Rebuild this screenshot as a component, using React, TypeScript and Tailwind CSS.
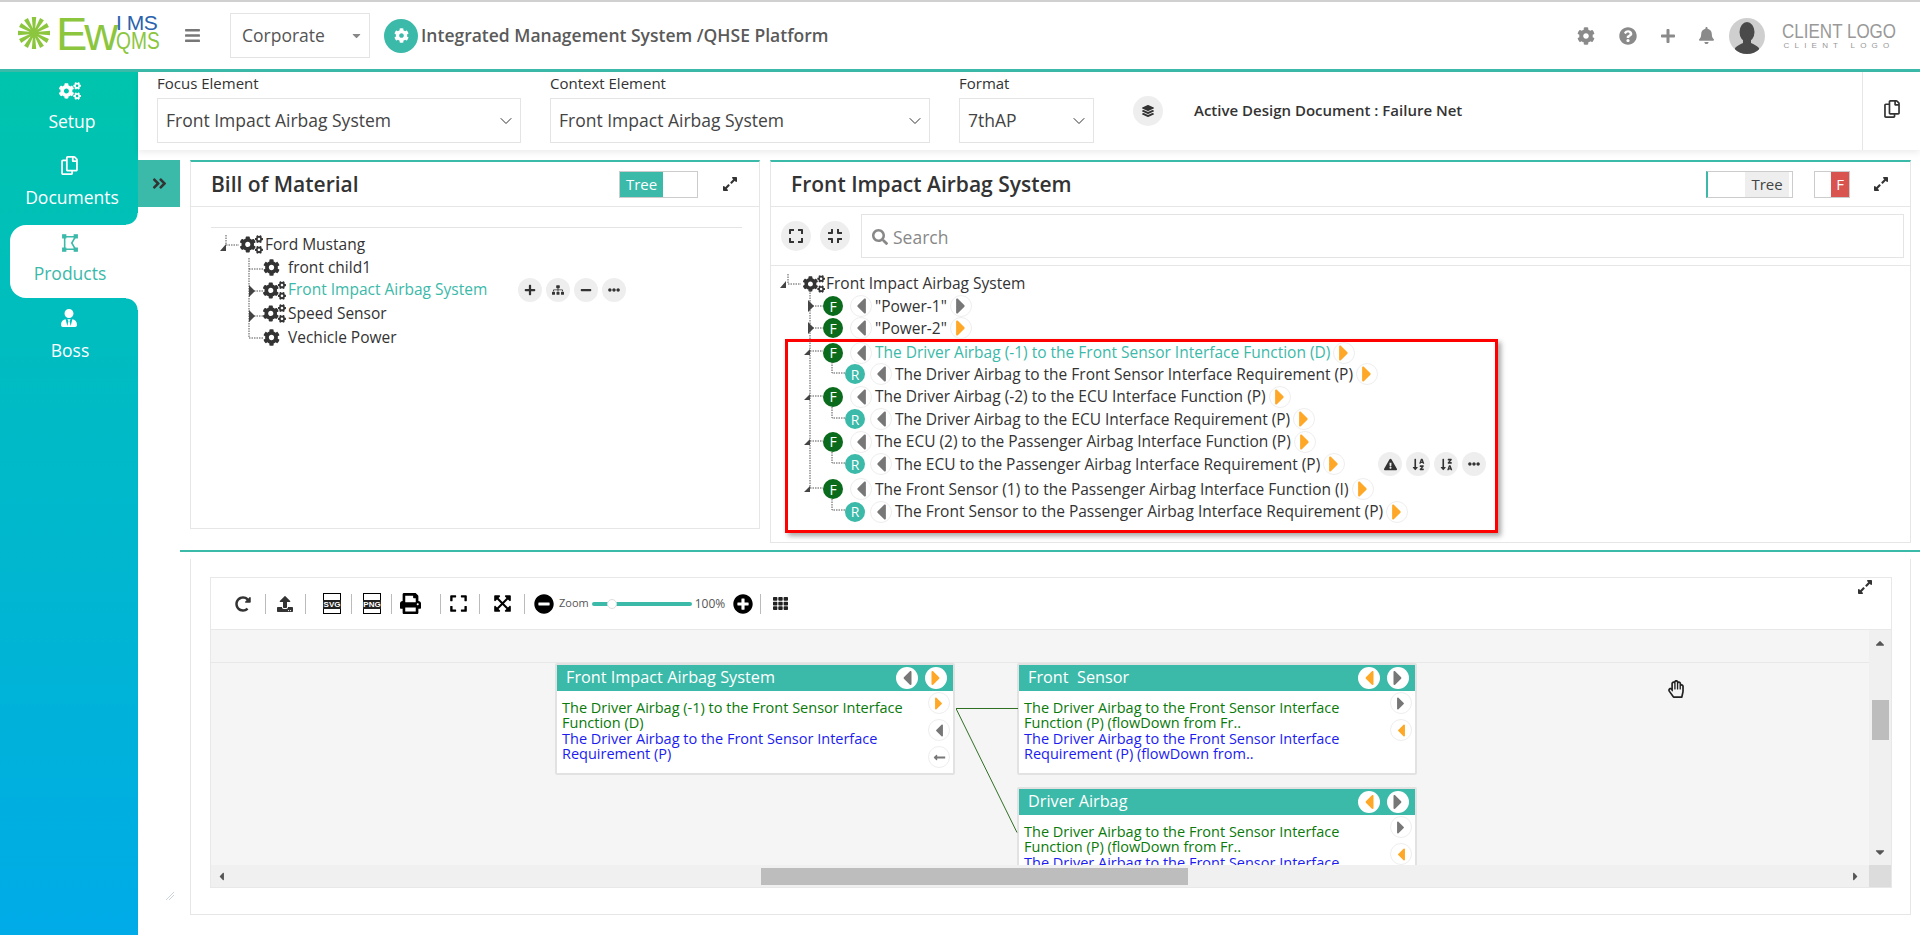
import { ChevronDown } from 'lucide-react';
import {
  FaAngleDoubleRight,
  FaBars,
  FaBell,
  FaCaretDown,
  FaCaretLeft,
  FaCaretRight,
  FaCaretUp,
  FaCog,
  FaCogs,
  FaCompress,
  FaEllipsisH,
  FaExclamationTriangle,
  FaExpand,
  FaExpandAlt,
  FaExpandArrowsAlt,
  FaLayerGroup,
  FaLongArrowAltLeft,
  FaMinus,
  FaMinusCircle,
  FaPlus,
  FaPlusCircle,
  FaPrint,
  FaQuestionCircle,
  FaRedoAlt,
  FaRegCopy,
  FaRegHandPaper,
  FaSearch,
  FaSitemap,
  FaSortAlphaDown,
  FaSortAlphaDownAlt,
  FaTh,
  FaUpload,
  FaUserTie,
} from 'react-icons/fa';

const ORANGE = '#ffa726';

const Logo = () => (
  <div className="relative h-[50px] w-[157px] shrink-0">
    <svg viewBox="0 0 34 34" className="absolute left-0 top-[5px] h-[34px] w-[34px]">
      {Array.from({ length: 12 }).map((_, i) => (
        <path key={i} d="M14.800 1h4.400L18 15h-2z" fill="#8cc63f" transform={`rotate(${i * 30} 17 17)`} />
      ))}
      <circle cx="17" cy="17" r="5" fill="#8cc63f" />
    </svg>
    <span className="absolute left-[39px] top-[-10px] font-['Liberation_Sans',sans-serif] text-[47px] leading-[66px] tracking-[-3px] text-[#8cc63f]">
      Ew
    </span>
    <span className="absolute left-[99px] top-[0px] font-['Liberation_Sans',sans-serif] text-[21px] leading-[24px] tracking-[-0.5px] text-[#2a62ad]">
      I MS
    </span>
    <span className="absolute left-[99px] top-[17px] origin-left scale-x-[0.8] font-['Liberation_Sans',sans-serif] text-[24px] leading-[26px] text-[#8cc63f]">
      QMS
    </span>
  </div>
);

const Avatar = () => (
  <div className="flex h-[36px] w-[36px] items-end justify-center overflow-hidden rounded-full bg-[#cfcfcf]">
    <svg viewBox="0 0 36 36" className="h-[36px] w-[36px]">
      <ellipse cx="18" cy="14" rx="7.5" ry="10" fill="#4a4a4a" />
      <path d="M14 22h8v3c3 1.500 6 2.500 8 5v6H6v-6c2-2.500 5-3.500 8-5z" fill="#4a4a4a" />
    </svg>
  </div>
);

const Header = () => (
  <header className="flex h-[72px] shrink-0 items-center border-b-[3px] border-t-2 border-b-[#3bb9a9] border-t-[#d0d0d0] bg-white">
    <div className="ml-[17px]">
      <Logo />
    </div>
    <FaBars className="ml-[10px] text-[#777]" size={17} />
    <div className="ml-[29px] flex h-[45px] w-[140px] items-center justify-between border border-[#e4e4e4] pl-[11px] pr-[6px] text-[17.5px] text-[#555]">
      Corporate
      <FaCaretDown className="text-[#888]" size={13} />
    </div>
    <div className="ml-[14px] flex h-[34px] w-[34px] items-center justify-center rounded-full bg-[#3bb9a9]">
      <FaCog className="text-white" size={15} />
    </div>
    <h1 className="ml-[3px] text-[17.5px] font-semibold text-[#5a5a5a]">Integrated Management System /QHSE Platform</h1>
    <div className="ml-auto flex items-center text-[#8a8a8a]">
      <FaCog size={18} />
      <FaQuestionCircle className="ml-[24px]" size={18} />
      <FaPlus className="ml-[23px]" size={16} />
      <FaBell className="ml-[22px]" size={17} />
      <div className="ml-[14px]">
        <Avatar />
      </div>
      <div className="ml-[18px] mr-[25px] flex w-[112px] flex-col items-center whitespace-nowrap font-['Liberation_Sans',sans-serif] text-[#999]">
        <span className="scale-x-[0.85] text-[20px] leading-[20px]">CLIENT LOGO</span>
        <span className="text-[8px] leading-[10px] tracking-[5.2px]">CLIENT LOGO</span>
      </div>
    </div>
  </header>
);

const ProductsIcon = () => (
  <svg viewBox="0 0 18 20" className="h-[18px] w-[16px] text-[#3bb9a9]" fill="none" stroke="currentColor" strokeWidth="1.800">
    <path d="M3 3h12l-4 7 4 7H3z" />
    <rect x="1" y="1" width="3" height="3" fill="currentColor" />
    <rect x="14" y="1" width="3" height="3" fill="currentColor" />
    <rect x="1" y="16" width="3" height="3" fill="currentColor" />
    <rect x="14" y="16" width="3" height="3" fill="currentColor" />
  </svg>
);

const Sidebar = () => (
  <aside className="flex w-[138px] shrink-0 flex-col bg-gradient-to-b from-[#00c4ac] to-[#00abe8] text-[17.5px] text-white">
    <div className="flex h-[76px] flex-col items-center pt-[8px]">
      <FaCogs size={22} className="ml-[2px]" />
      <span className="ml-[6px] mt-[7px] leading-[24px]">Setup</span>
    </div>
    <div className="flex h-[77px] flex-col items-center pt-[8px]">
      <FaRegCopy size={19} />
      <span className="ml-[6px] mt-[10px] leading-[24px]">Documents</span>
    </div>
    <div className="relative ml-[10px] flex h-[73px] flex-col items-center rounded-l-[16px] bg-white pr-[8px] pt-[9px] text-[#3bb9a9]">
      <span className="absolute -top-[12px] right-0 h-[12px] w-[12px] bg-[radial-gradient(circle_at_0_0,transparent_11px,white_12px)]" />
      <ProductsIcon />
      <span className="mt-[9px] leading-[24px]">Products</span>
      <span className="absolute -bottom-[12px] right-0 h-[12px] w-[12px] bg-[radial-gradient(circle_at_0_100%,transparent_11px,white_12px)]" />
    </div>
    <div className="flex flex-col items-center pt-[11px]">
      <FaUserTie size={18} />
      <span className="ml-[2px] mt-[11px] leading-[24px]">Boss</span>
    </div>
  </aside>
);

const SelectBox = ({ label, value, width }: { label: string; value: string; width: string }) => (
  <div className={width}>
    <div className="h-[26px] text-[15px] leading-[22px] text-[#333]">{label}</div>
    <div className="flex h-[45px] items-center justify-between border border-[#e4e4e4] pl-[8px] pr-[4px] text-[17.5px] text-[#444]">
      {value}
      <ChevronDown size={20} strokeWidth={1.2} className="text-[#333]" />
    </div>
  </div>
);

const FilterBar = () => (
  <div className="relative z-10 flex h-[78px] shrink-0 bg-white shadow-[0_3px_6px_rgba(0,0,0,0.07)]">
    <div className="ml-[19px] flex items-start gap-[29px]">
      <SelectBox label="Focus Element" value="Front Impact Airbag System" width="w-[364px]" />
      <SelectBox label="Context Element" value="Front Impact Airbag System" width="w-[380px]" />
      <SelectBox label="Format" value="7thAP" width="w-[135px]" />
    </div>
    <div className="ml-[39px] mt-[24px] flex h-[30px] w-[30px] items-center justify-center rounded-full bg-[#eee] text-[#333]">
      <FaLayerGroup size={12} />
    </div>
    <div className="ml-[31px] mt-[26px] text-[15px] font-semibold leading-[24px] text-[#333]">
      Active Design Document : Failure Net
    </div>
    <div className="ml-auto flex w-[58px] justify-center border-l border-[#e6e6e6] pt-[28px] text-[#333]">
      <FaRegCopy size={18} />
    </div>
  </div>
);

const RoundBtn = ({ children, size = 'w-[24px] h-[24px]' }: { children: React.ReactNode; size?: string }) => (
  <span className={`flex shrink-0 items-center justify-center rounded-full bg-[#eee] text-[#333] ${size}`}>{children}</span>
);

const CaretBtn = ({
  dir,
  color = '#777',
  solid,
  iconSize = 26,
}: {
  dir: 'left' | 'right';
  color?: string;
  solid?: boolean;
  iconSize?: number;
}) => {
  const Icon = dir === 'left' ? FaCaretLeft : FaCaretRight;
  return (
    <span
      className={`flex h-[22px] w-[22px] shrink-0 items-center justify-center rounded-full ${
        solid ? 'bg-white' : 'border border-[#eee] bg-white'
      }`}
    >
      <Icon size={iconSize} color={color} />
    </span>
  );
};

const BomTree = () => (
  <div className="relative ml-[20px] mt-[20px] w-[531px] border-t border-[#e4e4e4] pt-[5px] text-[15.5px] font-medium text-[#333]">
    <svg className="pointer-events-none absolute left-0 top-0 h-[130px] w-[100px]" fill="none">
      <path
        d="M15 7v10h13M38 30v80h14M38 41h14M38 63h14M38 88h14"
        stroke="#555"
        strokeDasharray="1.500 1"
      />
      <path d="M9 23l6-7v7zM38 57l6 6-6 6zM38 82l6 6-6 6z" fill="#444" />
    </svg>
    <div className="flex h-[23px] items-center pl-[29px]">
      <FaCogs size={23} />
      <span className="ml-[2px]">Ford Mustang</span>
    </div>
    <div className="flex h-[23px] items-center pl-[52px]">
      <FaCog size={17} />
      <span className="ml-[8px]">front child1</span>
    </div>
    <div className="flex h-[22px] items-center pl-[52px]">
      <FaCogs size={23} />
      <span className="ml-[2px] text-[#3bb9a9]">Front Impact Airbag System</span>
      <div className="ml-[31px] flex gap-[4px]">
        <RoundBtn><FaPlus size={12} /></RoundBtn>
        <RoundBtn><FaSitemap size={12} /></RoundBtn>
        <RoundBtn><FaMinus size={12} /></RoundBtn>
        <RoundBtn><FaEllipsisH size={12} /></RoundBtn>
      </div>
    </div>
    <div className="flex h-[25px] items-center pl-[52px]">
      <FaCogs size={23} />
      <span className="ml-[2px]">Speed Sensor</span>
    </div>
    <div className="flex h-[23px] items-center pl-[52px]">
      <FaCog size={17} />
      <span className="ml-[8px]">Vechicle Power</span>
    </div>
  </div>
);

const Badge = ({ kind }: { kind: 'F' | 'R' }) => (
  <span
    className={`flex h-[20px] w-[20px] shrink-0 items-center justify-center rounded-full text-[14px] font-medium text-white ${
      kind === 'F' ? 'bg-[#0a6b1c]' : 'bg-[#3bb9a9]'
    }`}
  >
    {kind}
  </span>
);

const TreeRow = ({
  kind,
  text,
  next = ORANGE,
  active,
  className = 'h-[22.5px]',
  children,
}: {
  kind: 'F' | 'R';
  text: string;
  next?: string;
  active?: boolean;
  className?: string;
  children?: React.ReactNode;
}) => (
  <div className={`flex items-center ${kind === 'F' ? 'pl-[52px]' : 'pl-[74px]'} ${className}`}>
    <Badge kind={kind} />
    <span className={kind === 'F' ? 'ml-[7px]' : 'ml-[5px]'}>
      <CaretBtn dir="left" />
    </span>
    <span className={`ml-[3px] whitespace-nowrap ${active ? 'text-[#3bb9a9]' : ''}`}>{text}</span>
    <span className="ml-[3px]">
      <CaretBtn dir="right" color={next} />
    </span>
    {children}
  </div>
);

const FunctionTree = () => (
  <div className="relative pt-[7px] text-[15.5px] font-medium text-[#333]">
    <svg className="pointer-events-none absolute left-0 top-0 h-[270px] w-[80px]" fill="none">
      <path
        d="M17 8v10h13M39 24v198M39 40h13M39 62h13M39 85h13M39 130h13M39 175h13M39 222h13M61 96v11h14M61 141v11h14M61 186v11h14M61 233v11h14"
        stroke="#555"
        strokeDasharray="1.500 1"
      />
      <path d="M9 22l6-7v7zM37 34l6 6-6 6zM37 56l6 6-6 6zM33 89l6-6v6zM33 134l6-6v6zM33 179l6-6v6zM33 226l6-6v6z" fill="#444" />
    </svg>
    <div className="flex h-[22px] items-center pl-[32px]">
      <FaCogs size={22} />
      <span className="ml-[1px]">Front Impact Airbag System</span>
    </div>
    <TreeRow kind="F" text={'"Power-1"'} next="#777" />
    <TreeRow kind="F" text={'"Power-2"'} className="h-[21.5px]" />
    <div className="ml-[14px] h-[194px] w-[713px] border-[3px] border-[#f00] shadow-[3px_3px_5px_rgba(0,0,0,0.35)]">
      <div className="-ml-[17px] w-[800px]">
        <TreeRow kind="F" text="The Driver Airbag (-1) to the Front Sensor Interface Function (D)" active className="h-[21px]" />
        <TreeRow kind="R" text="The Driver Airbag to the Front Sensor Interface Requirement (P)" />
        <TreeRow kind="F" text="The Driver Airbag (-2) to the ECU Interface Function (P)" />
        <TreeRow kind="R" text="The Driver Airbag to the ECU Interface Requirement (P)" />
        <TreeRow kind="F" text="The ECU (2) to the Passenger Airbag Interface Function (P)" />
        <TreeRow kind="R" text="The ECU to the Passenger Airbag Interface Requirement (P)">
          <div className="ml-[33px] flex gap-[4px]">
            <RoundBtn><FaExclamationTriangle size={13} /></RoundBtn>
            <RoundBtn><FaSortAlphaDown size={13} /></RoundBtn>
            <RoundBtn><FaSortAlphaDownAlt size={13} /></RoundBtn>
            <RoundBtn><FaEllipsisH size={12} /></RoundBtn>
          </div>
        </TreeRow>
        <TreeRow kind="F" text="The Front Sensor (1) to the Passenger Airbag Interface Function (I)" className="mt-[2.500px] h-[22.500px]" />
        <TreeRow kind="R" text="The Front Sensor to the Passenger Airbag Interface Requirement (P)" />
      </div>
    </div>
  </div>
);

const BomPanel = () => (
  <section className="h-[369px] w-[570px] shrink-0 border border-t-2 border-[#e6e6e6] border-t-[#3bb9a9]">
    <div className="flex h-[45px] items-center border-b border-[#e6e6e6] pl-[20px] pr-[21px]">
      <h2 className="pt-[2px] text-[21px] font-semibold text-[#333]">Bill of Material</h2>
      <div className="ml-auto flex h-[27px] w-[79px] border border-[#ccc] text-[15px] text-white">
        <span className="flex w-[43px] items-center justify-center bg-[#3bb9a9]">Tree</span>
      </div>
      <FaExpandAlt className="ml-[24px] text-[#333]" size={16} />
    </div>
    <BomTree />
  </section>
);

const DetailPanel = () => (
  <section className="h-[383px] w-[1141px] shrink-0 border border-t-2 border-[#e6e6e6] border-t-[#3bb9a9]">
    <div className="flex h-[45px] items-center border-b border-[#e6e6e6] pl-[20px] pr-[21px]">
      <h2 className="pt-[2px] text-[21px] font-semibold text-[#333]">Front Impact Airbag System</h2>
      <div className="ml-auto flex h-[27px] w-[87px] justify-end border border-l-2 border-[#ccc] border-l-[#3bb9a9] pr-[3px] text-[15px] text-[#444]">
        <span className="flex w-[44px] items-center justify-center bg-[#eee]">Tree</span>
      </div>
      <div className="ml-[21px] flex h-[27px] w-[36px] justify-end border border-[#ccc] text-[15px] text-white">
        <span className="flex w-[18px] items-center justify-center bg-[#d9534f]">F</span>
      </div>
      <FaExpandAlt className="ml-[23px] text-[#333]" size={16} />
    </div>
    <div className="flex h-[59px] items-center gap-[9px] border-b border-[#e6e6e6] pl-[10px] pr-[6px]">
      <RoundBtn size="w-[30px] h-[30px]"><FaExpand size={16} /></RoundBtn>
      <RoundBtn size="w-[30px] h-[30px]"><FaCompress size={16} /></RoundBtn>
      <div className="ml-[2px] flex h-[44px] flex-1 items-center border border-[#e4e4e4] pl-[10px] pt-[2px] text-[17.5px] text-[#888]">
        <FaSearch size={16} />
        <span className="ml-[5px]">Search</span>
      </div>
    </div>
    <FunctionTree />
  </section>
);

const FileBadge = ({ label, className }: { label: string; className: string }) => (
  <span className={`relative h-[21px] w-[18px] shrink-0 border border-black bg-white ${className}`}>
    <span className="absolute left-[-1px] top-[6px] w-[18px] bg-[#222] text-center font-['Liberation_Sans',sans-serif] text-[8px] font-bold leading-[9px] text-white">
      {label}
    </span>
  </span>
);

const Sep = ({ className }: { className: string }) => <span className={`h-[20px] w-px shrink-0 bg-[#bbb] ${className}`} />;

const Toolbar = () => (
  <div className="flex h-[51px] items-center pl-[24px] text-black">
    <FaRedoAlt size={16} className="shrink-0 text-[#333]" />
    <Sep className="ml-[14px]" />
    <FaUpload size={16} className="ml-[11px] shrink-0 text-[#333]" />
    <Sep className="ml-[12px]" />
    <FileBadge label="SVG" className="ml-[17px]" />
    <Sep className="ml-[10px]" />
    <FileBadge label="PNG" className="ml-[11px]" />
    <Sep className="ml-[10px]" />
    <FaPrint size={21} className="ml-[8px] shrink-0" />
    <Sep className="ml-[19px]" />
    <FaExpand size={19} className="ml-[8px] shrink-0" />
    <Sep className="ml-[11px]" />
    <FaExpandArrowsAlt size={19} className="ml-[13px] shrink-0" />
    <Sep className="ml-[12px]" />
    <FaMinusCircle size={20} className="ml-[9px] shrink-0" />
    <span className="ml-[5px] text-[11px] text-[#555]">Zoom</span>
    <span className="relative mx-[3px] h-[4px] w-[100px] rounded-full bg-[#3bb9a9]">
      <span className="absolute left-[15px] top-[-3px] h-[10px] w-[10px] rounded-full border border-[#ddd] bg-white" />
    </span>
    <span className="text-[12px] text-[#555]">100%</span>
    <FaPlusCircle className="ml-[8px] shrink-0" size={20} />
    <Sep className="ml-[7px]" />
    <FaTh size={15} className="ml-[12px] shrink-0 text-[#222]" />
  </div>
);

const NodeCard = ({
  title,
  lines,
  top,
  left,
  headLeft,
  headRight,
  side,
}: {
  title: string;
  lines: [string, string];
  top: string;
  left: string;
  headLeft: string;
  headRight: string;
  side: React.ReactNode;
}) => (
  <div className={`absolute h-[112px] w-[400px] rounded-[2px] border-2 border-[#e2e2e2] bg-white ${top} ${left}`}>
    <div className="flex h-[26px] items-center justify-between whitespace-pre bg-[#3bb9a9] pl-[9px] pr-[6px] text-[16.25px] font-medium text-white">
      <span className="-mt-[2px]">{title}</span>
      <div className="flex gap-[7px]">
        <CaretBtn dir="left" color={headLeft} solid iconSize={24} />
        <CaretBtn dir="right" color={headRight} solid iconSize={24} />
      </div>
    </div>
    <div className="flex pl-[5px] pr-[3px] pt-[9px] text-[14.5px] leading-[15.400px]">
      <div className="w-[360px]">
        <div className="text-[#0a7a0a]">{lines[0]}</div>
        <div className="text-[#1c1cf0]">{lines[1]}</div>
      </div>
      <div className="ml-auto -mt-[9px] flex flex-col gap-[5px] pt-[1px]">{side}</div>
    </div>
  </div>
);

const Diagram = () => (
  <div className="relative flex-1 overflow-hidden bg-[#f5f5f5]">
    <NodeCard
      title="Front Impact Airbag System"
      lines={[
        'The Driver Airbag (-1) to the Front Sensor Interface Function (D)',
        'The Driver Airbag to the Front Sensor Interface Requirement (P)',
      ]}
      top="top-0"
      left="left-[344px]"
      headLeft="#777"
      headRight={ORANGE}
      side={
        <>
          <CaretBtn dir="right" color={ORANGE} iconSize={21} />
          <CaretBtn dir="left" iconSize={21} />
          <span className="flex h-[22px] w-[22px] items-center justify-center rounded-full border border-[#eee]">
            <FaLongArrowAltLeft size={13} color="#777" />
          </span>
        </>
      }
    />
    <NodeCard
      title="Front  Sensor"
      lines={[
        'The Driver Airbag to the Front Sensor Interface Function (P) (flowDown from Fr..',
        'The Driver Airbag to the Front Sensor Interface Requirement (P) (flowDown from..',
      ]}
      top="top-0"
      left="left-[806px]"
      headLeft={ORANGE}
      headRight="#777"
      side={
        <>
          <CaretBtn dir="right" iconSize={21} />
          <CaretBtn dir="left" color={ORANGE} iconSize={21} />
        </>
      }
    />
    <NodeCard
      title="Driver Airbag"
      lines={[
        'The Driver Airbag to the Front Sensor Interface Function (P) (flowDown from Fr..',
        'The Driver Airbag to the Front Sensor Interface Requirement (P) (flowDown from..',
      ]}
      top="top-[124px]"
      left="left-[806px]"
      headLeft={ORANGE}
      headRight="#777"
      side={
        <>
          <CaretBtn dir="right" iconSize={21} />
          <CaretBtn dir="left" color={ORANGE} iconSize={21} />
        </>
      }
    />
    <svg className="pointer-events-none absolute left-[745px] top-[45px] h-[130px] w-[62px]" fill="none" stroke="#2f6f22">
      <path d="M0 0.500h62M0 0.500l61 124" />
    </svg>
    <FaRegHandPaper className="absolute left-[1456px] top-[17px] text-[#222]" size={18} />
  </div>
);

const LowerPanel = () => (
  <section className="relative ml-[52px] h-[356px] w-[1721px] shrink-0 border border-t-0 border-[#e6e6e6] pl-[19px] pr-[18px] pt-[18px]">
    <div className="relative flex h-[311px] flex-col border border-[#e8e8e8]">
      <Toolbar />
      <FaExpandAlt className="absolute right-[18px] top-[1px] text-[#333]" size={16} />
      <div className="flex min-h-0 flex-1">
        <div className="flex min-w-0 flex-1 flex-col">
          <div className="h-[34px] shrink-0 border-y border-[#e8e8e8] bg-[#f5f5f5]" />
          <Diagram />
        </div>
        <div className="flex w-[22px] flex-col items-center border-t border-[#e8e8e8] bg-[#f0f0f0] py-[6px] text-[#555]">
          <FaCaretUp size={14} />
          <span className="mt-[50px] h-[40px] w-[17px] bg-[#bdbdbd]" />
          <FaCaretDown size={14} className="mt-auto" />
        </div>
      </div>
      <div className="flex h-[22px] shrink-0 items-center bg-[#f0f0f0] text-[#555]">
        <FaCaretLeft size={13} className="ml-[4px]" />
        <span className="ml-[533px] h-[17px] w-[427px] bg-[#bdbdbd]" />
        <FaCaretRight size={13} className="ml-auto mr-[7px]" />
        <span className="h-[22px] w-[22px] bg-[#dcdcdc]" />
      </div>
    </div>
    <svg viewBox="0 0 10 10" className="absolute -left-[26px] top-[332px] h-[10px] w-[10px]" stroke="#c9d4dc" fill="none">
      <path d="M1 9L9 1M4 9l5-5" />
    </svg>
  </section>
);

export default function App() {
  return (
    <div className="flex h-screen flex-col overflow-hidden bg-white font-['Open_Sans','Noto_Sans',sans-serif]">
      <Header />
      <div className="flex min-h-0 flex-1">
        <Sidebar />
        <main className="flex min-w-0 flex-1 flex-col">
          <FilterBar />
          <div className="mt-[10px] flex shrink-0 items-start">
            <button className="flex h-[47px] w-[42px] shrink-0 items-center justify-center bg-[#3bb9a9] text-[#333]">
              <FaAngleDoubleRight size={17} />
            </button>
            <div className="ml-[10px] flex gap-[10px]">
              <BomPanel />
              <DetailPanel />
            </div>
          </div>
          <div className="ml-[42px] mt-[7px] h-[2px] shrink-0 bg-[#3bb9a9]" />
          <div className="mt-[7px]">
            <LowerPanel />
          </div>
        </main>
      </div>
    </div>
  );
}
